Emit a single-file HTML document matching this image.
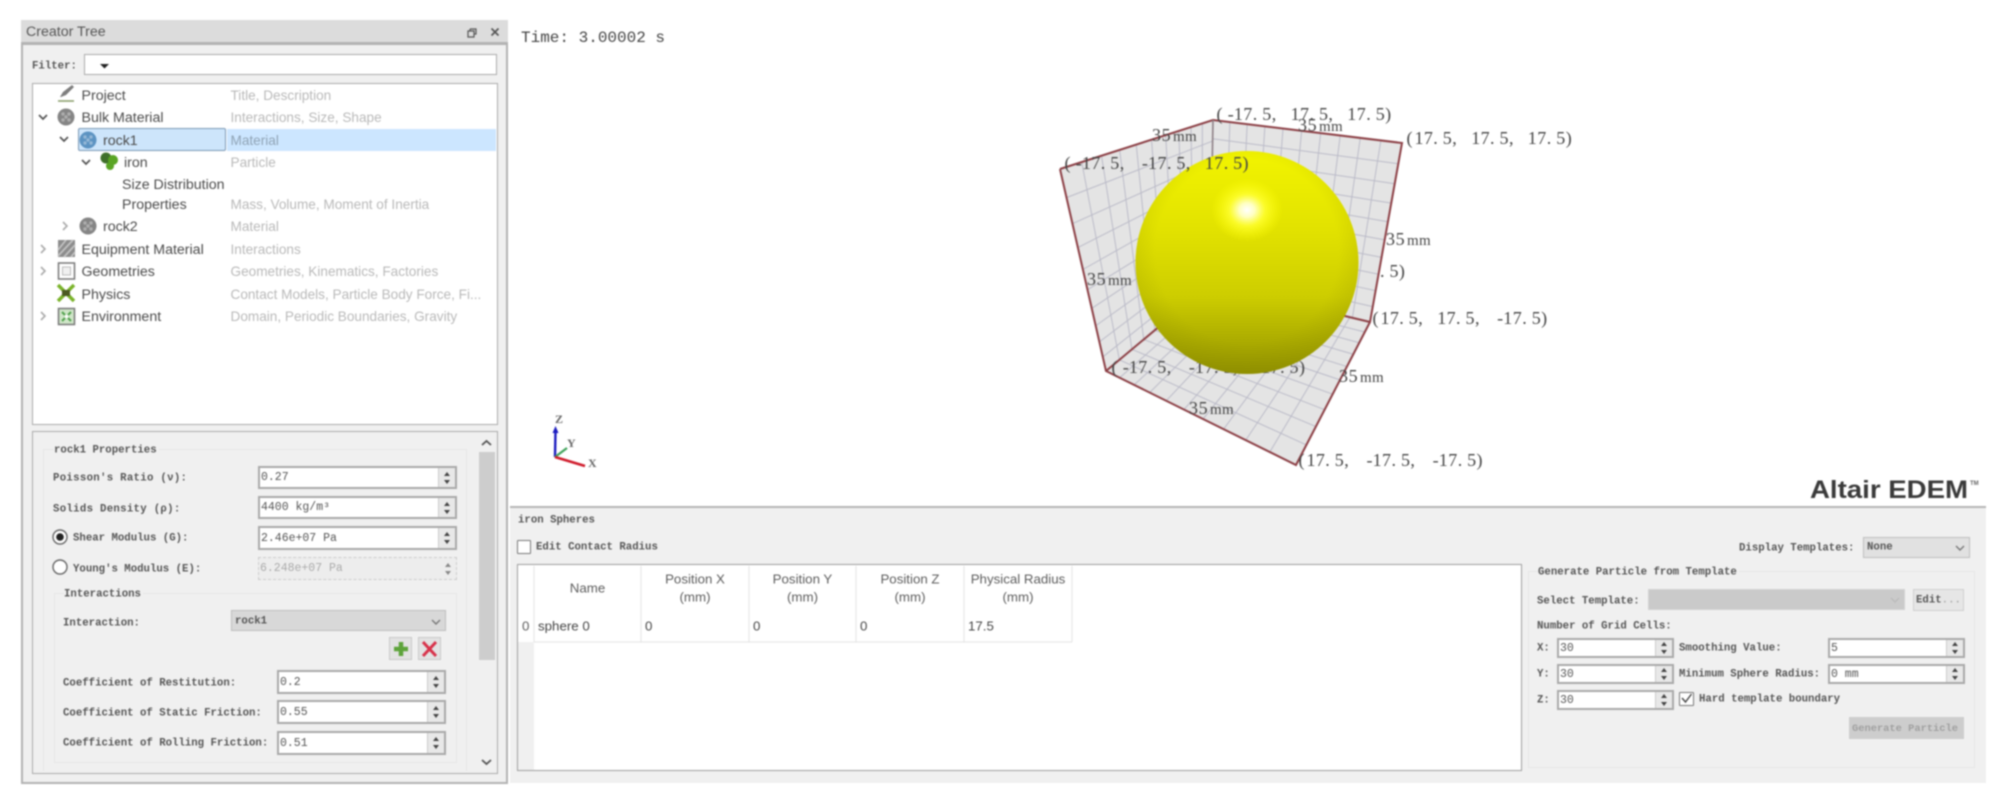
<!DOCTYPE html>
<html lang="en"><head><meta charset="utf-8"><title>Altair EDEM</title>
<style>
html,body{margin:0;padding:0;background:#fff;width:2008px;height:809px;overflow:hidden}
#w{position:absolute;left:0;top:0;width:2008px;height:809px;overflow:hidden;filter:blur(.8px)}
.b{position:absolute;box-sizing:border-box}
.t{position:absolute;white-space:nowrap;line-height:1;transform:translateY(-50%);font-family:"Liberation Sans",sans-serif}
.s{font-size:14.2px;color:#4a4a4a;margin-top:.5px}
.g{font-size:13.6px;color:#b9b9b9;margin-top:.5px}
.c{font-size:13.3px;color:#5c5c5c}
.m{font-family:"Liberation Mono",monospace;font-size:10.7px;font-weight:bold;color:#555;margin-top:1.5px}
.spin{position:absolute;box-sizing:border-box;background:#fff;border:2px solid #a9a9a9;font:11.5px/1 "Liberation Mono",monospace;color:#555;display:flex;align-items:center;padding:1px 0 0 1px;white-space:nowrap}
.spin i{position:absolute;right:0;top:0;bottom:0;width:16px;background:#e8e8e8;border-left:1px solid #ccc}
.spin i:before,.spin i:after{content:"";position:absolute;left:5px;border-left:3px solid transparent;border-right:3px solid transparent}
.spin i:before{top:calc(50% - 6px);border-bottom:4px solid #444}
.spin i:after{bottom:calc(50% - 6px);border-top:4px solid #444}
.dis{background:#ededed;border:1px dashed #ccc;color:#aaa}
.dis i{background:#ededed;border-left:0}
.dis i:before{border-bottom-color:#888}.dis i:after{border-top-color:#888}
.combo{position:absolute;box-sizing:border-box;background:#dcdcdc;border:1px solid #bdbdbd}
.grp{position:absolute;box-sizing:border-box;border:1px solid #e6e6e6}
</style></head><body><div id="w">

<!-- left panel -->
<div class="b" style="left:21px;top:20px;width:487px;height:24px;background:#dcdcdc;border-bottom:2px solid #b5b5b5"></div>
<div class="b" style="left:21px;top:43px;width:487px;height:741px;background:#f0f0f0;border:2px solid #b2b2b2"></div>
<div class="t" style="left:26px;top:32px;font-size:14.2px;color:#555">Creator Tree</div>
<div class="t m" style="left:32px;top:65px">Filter:</div>
<div class="b" style="left:84px;top:54px;width:413px;height:21px;background:#fff;border:1.5px solid #aaa"></div>
<div class="b" style="left:32px;top:83px;width:466px;height:342px;background:#fff;border:1.5px solid #aaa"></div>
<div class="b" style="left:227px;top:129px;width:269px;height:22px;background:#cce6ff"></div>
<div class="b" style="left:78px;top:128px;width:148px;height:23px;background:#cde5fb;border:1.5px solid #7b98b4;border-radius:2px"></div>

<div class="t s" style="left:81.500px;top:95px">Project</div><div class="t g" style="left:230.500px;top:95px">Title, Description</div>
<div class="t s" style="left:81.500px;top:117px">Bulk Material</div><div class="t g" style="left:230.500px;top:117px">Interactions, Size, Shape</div>
<div class="t s" style="left:103px;top:140px">rock1</div><div class="t g" style="left:230.500px;top:140px;color:#8fa3b5">Material</div>
<div class="t s" style="left:124px;top:162px">iron</div><div class="t g" style="left:230.500px;top:162px">Particle</div>
<div class="t s" style="left:122px;top:184px">Size Distribution</div>
<div class="t s" style="left:122px;top:204px">Properties</div><div class="t g" style="left:230.500px;top:204px">Mass, Volume, Moment of Inertia</div>
<div class="t s" style="left:103px;top:226px">rock2</div><div class="t g" style="left:230.500px;top:226px">Material</div>
<div class="t s" style="left:81.500px;top:249px">Equipment Material</div><div class="t g" style="left:230.500px;top:249px">Interactions</div>
<div class="t s" style="left:81.500px;top:271px">Geometries</div><div class="t g" style="left:230.500px;top:271px">Geometries, Kinematics, Factories</div>
<div class="t s" style="left:81.500px;top:294px">Physics</div><div class="t g" style="left:230.500px;top:294px">Contact Models, Particle Body Force, Fi...</div>
<div class="t s" style="left:81.500px;top:316px">Environment</div><div class="t g" style="left:230.500px;top:316px">Domain, Periodic Boundaries, Gravity</div>

<!-- properties -->
<div class="b" style="left:32px;top:431px;width:466px;height:343px;background:#f0f0f0;border:1.5px solid #aaa"></div>
<div class="grp" style="left:43px;top:449px;width:424px;height:322px;border-bottom:0"></div>
<div class="b" style="left:479px;top:452px;width:16px;height:208px;background:#cdcdcd"></div>
<div class="t m" style="left:54px;top:449px;background:#f0f0f0;padding:0 2px 0 0">rock1 Properties</div>
<div class="t m" style="left:53px;top:477px;letter-spacing:.3px">Poisson's Ratio (&#957;):</div>
<div class="t m" style="left:53px;top:508px;letter-spacing:.3px">Solids Density (&#961;):</div>
<div class="t m" style="left:73px;top:537px">Shear Modulus (G):</div>
<div class="t m" style="left:73px;top:568px">Young's Modulus (E):</div>
<div class="spin" style="left:258px;top:466px;width:199px;height:23px">0.27<i></i></div>
<div class="spin" style="left:258px;top:496px;width:199px;height:23px">4400 kg/m&#179;<i></i></div>
<div class="spin" style="left:258px;top:526px;width:199px;height:24px">2.46e+07 Pa<i></i></div>
<div class="spin dis" style="left:258px;top:557px;width:199px;height:23px">6.248e+07 Pa<i></i></div>
<div class="grp" style="left:54px;top:593px;width:403px;height:170px"></div>
<div class="t m" style="left:64px;top:593px;background:#f0f0f0;padding-right:2px">Interactions</div>
<div class="t m" style="left:63px;top:622px">Interaction:</div>
<div class="combo" style="left:231px;top:610px;width:215px;height:21px;background:#d8d8d8"></div>
<div class="t m" style="left:235px;top:620px">rock1</div>
<div class="b" style="left:389px;top:637px;width:23px;height:23px;background:#e2e2e2;border:1px solid #c9c9c9"></div>
<div class="b" style="left:418px;top:637px;width:23px;height:23px;background:#e2e2e2;border:1px solid #c9c9c9"></div>
<div class="t m" style="left:63px;top:682px">Coefficient of Restitution:</div>
<div class="t m" style="left:63px;top:712px">Coefficient of Static Friction:</div>
<div class="t m" style="left:63px;top:742px">Coefficient of Rolling Friction:</div>
<div class="spin" style="left:277px;top:670px;width:169px;height:24px">0.2<i></i></div>
<div class="spin" style="left:277px;top:700px;width:169px;height:24px">0.55<i></i></div>
<div class="spin" style="left:277px;top:731px;width:169px;height:24px">0.51<i></i></div>

<!-- time -->
<div class="t" style="left:521px;top:38px;font:16px/1 'Liberation Mono',monospace;color:#444">Time: 3.00002 s</div>

<!-- bottom panel -->
<div class="b" style="left:510px;top:506px;width:1476px;height:277px;background:#f0f0f0;border-top:2px solid #b5b5b5"></div>
<div class="t m" style="left:518px;top:519px">iron Spheres</div>
<div class="b" style="left:517px;top:540px;width:14px;height:14px;background:#fff;border:1.5px solid #777;border-radius:1px"></div>
<div class="t m" style="left:536px;top:546.500px">Edit Contact Radius</div>
<div class="b" style="left:517px;top:564px;width:1005px;height:207px;background:#fff;border:1.5px solid #9e9e9e"></div>
<div class="b" style="left:518px;top:642px;width:16px;height:128px;background:#f0f0f0"></div>
<svg class="b" style="left:0;top:0" width="2008" height="809" viewBox="0 0 2008 809">
<g stroke="#e3e3e3" stroke-width="1"><path d="M534 566V642M641 566V642M749 566V642M856 566V642M964 566V642M1072 566V642M534 642H1072"/></g>
</svg>
<div class="t c" style="left:534px;width:107px;top:588px;text-align:center">Name</div>
<div class="t c" style="left:641px;width:108px;top:579px;text-align:center">Position X</div>
<div class="t c" style="left:641px;width:108px;top:597px;text-align:center">(mm)</div>
<div class="t c" style="left:749px;width:107px;top:579px;text-align:center">Position Y</div>
<div class="t c" style="left:749px;width:107px;top:597px;text-align:center">(mm)</div>
<div class="t c" style="left:856px;width:108px;top:579px;text-align:center">Position Z</div>
<div class="t c" style="left:856px;width:108px;top:597px;text-align:center">(mm)</div>
<div class="t c" style="left:964px;width:108px;top:579px;text-align:center">Physical Radius</div>
<div class="t c" style="left:964px;width:108px;top:597px;text-align:center">(mm)</div>
<div class="t c" style="left:522px;top:626px">0</div>
<div class="t c" style="left:538px;top:626px;color:#444">sphere 0</div>
<div class="t c" style="left:645px;top:626px;color:#444">0</div>
<div class="t c" style="left:753px;top:626px;color:#444">0</div>
<div class="t c" style="left:860px;top:626px;color:#444">0</div>
<div class="t c" style="left:968px;top:626px;color:#444">17.5</div>

<div class="t m" style="left:1739px;top:547px">Display Templates:</div>
<div class="combo" style="left:1863px;top:537px;width:107px;height:21px;background:#e1e1e1"></div>
<div class="t m" style="left:1867px;top:546px">None</div>
<div class="grp" style="left:1528px;top:571px;width:447px;height:197px"></div>
<div class="t m" style="left:1538px;top:571px;background:#f0f0f0;padding-right:2px">Generate Particle from Template</div>
<div class="t m" style="left:1537px;top:600px">Select Template:</div>
<div class="combo" style="left:1648px;top:589px;width:257px;height:21px;background:#cacaca;border-color:#d2d2d2"></div>
<div class="b" style="left:1913px;top:589px;width:51px;height:22px;background:#e6e6e6;border:1px solid #cfcfcf"></div>
<div class="t m" style="left:1916px;top:599px">Edit<span style="color:#aaa">...</span></div>
<div class="t m" style="left:1537px;top:625px">Number of Grid Cells:</div>
<div class="t m" style="left:1537px;top:647px">X:</div>
<div class="t m" style="left:1537px;top:673px">Y:</div>
<div class="t m" style="left:1537px;top:699px">Z:</div>
<div class="spin" style="left:1557px;top:638px;width:117px;height:20px">30<i></i></div>
<div class="spin" style="left:1557px;top:664px;width:117px;height:20px">30<i></i></div>
<div class="spin" style="left:1557px;top:690px;width:117px;height:20px">30<i></i></div>
<div class="t m" style="left:1679px;top:647px">Smoothing Value:</div>
<div class="t m" style="left:1679px;top:673px">Minimum Sphere Radius:</div>
<div class="spin" style="left:1828px;top:638px;width:137px;height:20px">5<i></i></div>
<div class="spin" style="left:1828px;top:664px;width:137px;height:20px">0 mm<i></i></div>
<div class="b" style="left:1679px;top:692px;width:15px;height:14px;background:#fff;border:1.5px solid #777;border-radius:1px"></div>
<div class="t m" style="left:1699px;top:698px">Hard template boundary</div>
<div class="b" style="left:1849px;top:717px;width:115px;height:22px;background:#cdcdcd"></div>
<div class="t m" style="left:1852px;top:727px;color:#a0a0a0;font-size:10.4px">Generate Particle</div>

<svg class="b" style="left:0;top:0" width="2008" height="809" viewBox="0 0 2008 809">
<defs>
<linearGradient id="sb" x1="0" y1="0" x2="0" y2="1"><stop offset="0" stop-color="#f2f400"/><stop offset=".35" stop-color="#e2e200"/><stop offset=".65" stop-color="#cdcd00"/><stop offset="1" stop-color="#939300"/></linearGradient>
<radialGradient id="se" cx=".5" cy=".45" r=".55"><stop offset=".75" stop-color="#7a7a00" stop-opacity="0"/><stop offset="1" stop-color="#7a7a00" stop-opacity=".2"/></radialGradient>
<radialGradient id="sh"><stop offset="0" stop-color="#fff"/><stop offset=".22" stop-color="#ffffc0"/><stop offset=".5" stop-color="#ffff30" stop-opacity=".85"/><stop offset="1" stop-color="#ffff00" stop-opacity="0"/></radialGradient>
</defs>

<g fill="#e4e4e4">
<polygon points="1060,169 1213,120 1210,284 1106,371"/>
<polygon points="1213,120 1402,143 1370,322 1210,284"/>
<polygon points="1106,371 1210,284 1370,322 1296,465"/>
</g>
<g id="grid" stroke="#bbbbc8" stroke-width="1" fill="none"></g>
<g stroke="#8c3f45" stroke-width="2" fill="none">
<path d="M1060 169L1213 120L1402 143L1370 322L1296 465L1106 371L1060 169"/>
<path d="M1106 371L1210 284L1370 322"/>
</g>
<path d="M1213 120L1210 284" stroke="#8d7f85" stroke-width="1.6"/>

<g font-family="'Liberation Serif',serif" font-size="18" fill="#444">
<text class="q" x="1380" y="277">.5)</text>
<text class="q" x="1110" y="373">(-17.5, -17.5, -17.5)</text>
</g>
<circle cx="1247" cy="262.5" r="111.5" fill="url(#sb)"/>
<circle cx="1247" cy="262.5" r="111.5" fill="url(#se)"/>
<ellipse cx="1247" cy="210" rx="36" ry="32" fill="url(#sh)"/>
<g font-family="'Liberation Serif',serif" font-size="18" fill="#444">
<text class="q" x="1215" y="120">(-17.5, 17.5, 17.5)</text>
<text class="q" x="1298" y="131">35 <tspan font-size="15">mm</tspan></text>
<text class="q" x="1152" y="141">35 <tspan font-size="15">mm</tspan></text>
<text class="q" x="1405" y="144">(17.5, 17.5, 17.5)</text>
<text class="q" x="1063" y="169">(-17.5, -17.5, 17.5)</text>
<text class="q" x="1386" y="245">35 <tspan font-size="15">mm</tspan></text>
<text class="q" x="1087" y="285">35 <tspan font-size="15">mm</tspan></text>
<text class="q" x="1371" y="324">(17.5, 17.5, -17.5)</text>
<text class="q" x="1339" y="382">35 <tspan font-size="15">mm</tspan></text>
<text class="q" x="1189" y="414">35 <tspan font-size="15">mm</tspan></text>
<text class="q" x="1297" y="466">(17.5, -17.5, -17.5)</text>
</g>

<!-- axes -->
<path d="M555 457L555.5 431" stroke="#1c1cc0" stroke-width="2.4"/><path d="M555.5 426l-3 7h6z" fill="#1c1cc0"/>
<path d="M555 457L567 448" stroke="#3fa25a" stroke-width="2.2"/>
<path d="M555 457L585 466" stroke="#d01c2c" stroke-width="2.6"/>
<g font-family="'Liberation Serif',serif" font-size="12" font-weight="bold" fill="#666">
<text x="555" y="423">Z</text><text x="567" y="447">Y</text><text x="588" y="467">X</text>
</g>

<!-- logo -->
<text x="1810" y="498" font-family="'Liberation Sans',sans-serif" font-size="25" font-weight="bold" fill="#3a3a3a" textLength="158" lengthAdjust="spacingAndGlyphs">Altair EDEM</text>
<text x="1970" y="485" font-family="'Liberation Sans',sans-serif" font-size="6" font-weight="bold" fill="#666">TM</text>

<!-- title icons -->
<path d="M470 29h6v5h-2M470 29v2M468 31h6v6h-6z" fill="none" stroke="#555" stroke-width="1.200"/>
<path d="M491.500 28.500l7 7M498.500 28.500l-7 7" stroke="#555" stroke-width="1.700"/>
<path d="M100 64h9l-4.500 4.500z" fill="#222"/>

<!-- chevrons -->
<g fill="none" stroke="#555" stroke-width="1.7">
<path d="M39 115l4 4 4-4M60 137l4 4 4-4M82 160l4 4 4-4"/>
</g>
<g fill="none" stroke="#aaa" stroke-width="1.6">
<path d="M63 222l4 4-4 4M41 245l4 4-4 4M41 267l4 4-4 4M41 312l4 4-4 4"/>
</g>

<!-- tree icons -->
<path d="M60 97l3-5 9-7 2 2-8 8-5 2z" fill="#7d7d7d"/><path d="M58 101h16" stroke="#8ca06e" stroke-width="1.6"/>
<g id="balls"></g>
<g>
<circle cx="106" cy="158" r="5.500" fill="#3f6f2a"/><circle cx="113" cy="160" r="5" fill="#5aa524"/><circle cx="110" cy="166" r="4" fill="#5aa524"/>
</g>
<rect x="58" y="240" width="17" height="17" fill="#8c8c8c"/>
<path d="M58 250l8-10M58 256l15-16M64 257l11-12M71 257l4-5" stroke="#c2c2c2" stroke-width="1.8"/>
<rect x="58.500" y="263" width="16" height="16" fill="#fff" stroke="#777" stroke-width="1.500"/><rect x="62.500" y="267" width="8" height="8" fill="#f0f0f0" stroke="#bbb"/>
<path d="M58 285l16 16M74 285l-16 16" stroke="#7ab32a" stroke-width="3.500"/><rect x="62" y="290" width="8" height="6" fill="#4a5a20"/>
<rect x="58.500" y="308.500" width="16" height="16" fill="#cfe6c8" stroke="#777" stroke-width="1.500"/>
<path d="M62 312l3 3M71 312l-3 3M62 321l3-3M71 321l-3-3" stroke="#4fa04a" stroke-width="2"/><rect x="65" y="315" width="3" height="3" fill="#fff"/>

<!-- radios -->
<circle cx="60" cy="537" r="7" fill="#fff" stroke="#666" stroke-width="1.400"/><circle cx="60" cy="537" r="3.800" fill="#222"/>
<circle cx="60" cy="567" r="7" fill="#fff" stroke="#666" stroke-width="1.400"/>

<!-- scroll arrows -->
<path d="M482 445l4.500-4 4.500 4M482 760l4.500 4 4.500-4" fill="none" stroke="#555" stroke-width="1.800"/>

<!-- combo arrows -->
<g fill="none" stroke="#777" stroke-width="1.400">
<path d="M432 620l4 4 4-4M1956 546l4 4 4-4"/>
<path d="M1891 598l4 4 4-4" stroke="#bbb"/>
</g>

<!-- plus / cross -->
<path d="M401 642v14M394 649h14" stroke="#5da33a" stroke-width="4.500"/>
<path d="M423 642l13 14M436 642l-13 14" stroke="#d8324a" stroke-width="3"/>

<!-- checks -->
<path d="M1682 698l3.500 4 6-8" fill="none" stroke="#444" stroke-width="1.400"/>
</svg>
</div>
<script>
(function(){
var NS="http://www.w3.org/2000/svg";
var g=document.getElementById("grid");
function add(p,q){var l=document.createElementNS(NS,"line");l.setAttribute("x1",p[0]);l.setAttribute("y1",p[1]);l.setAttribute("x2",q[0]);l.setAttribute("y2",q[1]);g.appendChild(l)}
function H(p){
var x0=p[0][0],y0=p[0][1],x1=p[1][0],y1=p[1][1],x2=p[2][0],y2=p[2][1],x3=p[3][0],y3=p[3][1];
var dx1=x1-x2,dx2=x3-x2,sx=x0-x1+x2-x3,dy1=y1-y2,dy2=y3-y2,sy=y0-y1+y2-y3;
var den=dx1*dy2-dx2*dy1,gg=(sx*dy2-dx2*sy)/den,h=(dx1*sy-sx*dy1)/den;
var a=x1-x0+gg*x1,b=x3-x0+h*x3,d=y1-y0+gg*y1,e=y3-y0+h*y3;
return function(u,v){var w=gg*u+h*v+1;return [(a*u+b*v+x0)/w,(d*u+e*v+y0)/w]};
}
var faces=[[[1060,169],[1213,120],[1210,284],[1106,371]],[[1213,120],[1402,143],[1370,322],[1210,284]],[[1106,371],[1210,284],[1370,322],[1296,465]]];
faces.forEach(function(f){var m=H(f);for(var i=1;i<10;i++){var t=i/10;
add(m(t,0),m(t,1));add(m(0,t),m(1,t));}});
var texts=document.querySelectorAll("text.q");
for(var k=0;k<texts.length;k++){(function(t){
var s=t.textContent,x0=parseFloat(t.getAttribute("x")),xs=[];
if(s.length==5){xs=[x0,x0+9.6,x0+19,x0+21,x0+33];}
else{for(var i=0;i<s.length;i++){var c=s.charAt(i),off=c=="("?1.5:(c=="-"?3.3:0);xs.push((x0+i*9.45+off).toFixed(1));}}
t.setAttribute("x",xs.join(" "));
})(texts[k]);}
var balls=document.getElementById("balls");
[[66,117,"#858585"],[88,140,"#5c93c2"],[88,226,"#858585"]].forEach(function(b){
var h='<circle cx="'+b[0]+'" cy="'+b[1]+'" r="8.5" fill="'+b[2]+'"/>';
[[-3,-3],[3,-3],[-3,3],[3,3],[0,0]].forEach(function(o){h+='<circle cx="'+(b[0]+o[0])+'" cy="'+(b[1]+o[1])+'" r="1.7" fill="#fff" fill-opacity=".35"/>'});
balls.innerHTML+=h;});
})();
</script>
</body></html>
